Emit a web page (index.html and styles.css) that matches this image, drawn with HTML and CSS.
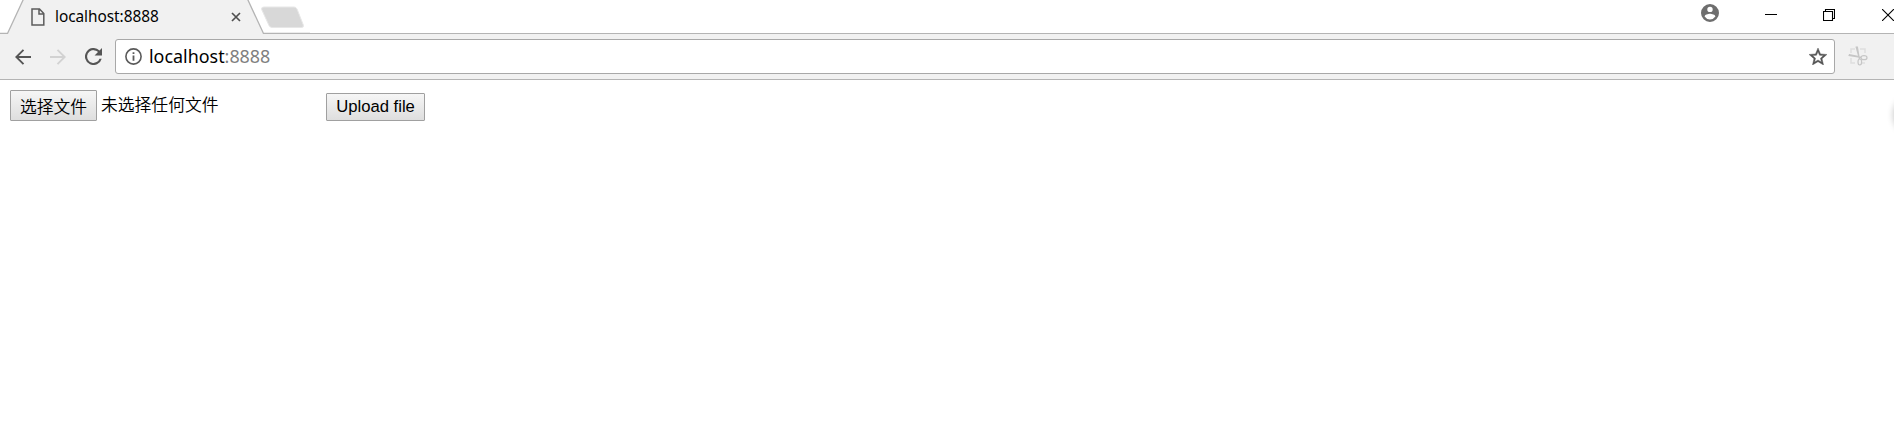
FILE: index.html
```
<!DOCTYPE html>
<html lang="zh-CN">
<head>
<meta charset="utf-8">
<title>localhost:8888</title>
<link rel="stylesheet" href="styles.css">
</head>
<body>
<header class="tabstrip">
  <div class="tab">
    <svg class="tab-shape" width="310" height="34" viewBox="0 0 310 34">
      <path d="M7.5 34L24 -2H98L247 -2L263.5 34Z" fill="#f1f1f1"/>
      <path d="M0 33.5H7.5L24 -2M247 -2L263.5 33.5H310" fill="none" stroke="#b4b4b4" stroke-width="1.3"/>
      <path d="M264 7H294Q296 7 297 9L303.3 25Q304 27.5 301.5 27.5H272Q270 27.5 269 25.5L261.7 9.500Q261 7 264 7Z" fill="#d8d8d8" stroke="#e7e7e7" stroke-width="1"/>
    </svg>
    <div class="tab-content">
      <svg class="page-icon" width="14" height="18" viewBox="0 0 14 18" fill="none" stroke="#5c5c5c" stroke-width="1.5"><path d="M1 1H8.500L12.800 5.500V17H1ZM8 1V6H12.800"/></svg>
      <span class="tab-title">localhost:8888</span>
      <svg class="tab-close" width="10" height="10" viewBox="0 0 10 10" stroke="#505050" stroke-width="1.7"><path d="M1 1L9 9M9 1L1 9"/></svg>
    </div>
  </div>
  <div class="window-controls">
    <svg class="profile" width="18" height="18" viewBox="2 2 20 20" fill="#6e6e6e"><path d="M12 2a10 10 0 1 0 0 20 10 10 0 0 0 0-20zm0 3a3 3 0 1 1 0 6 3 3 0 0 1 0-6zm0 14.200a7.200 7.200 0 0 1-6-3.220c.03-2 4-3.080 6-3.080s5.970 1.090 6 3.080a7.200 7.200 0 0 1-6 3.220z"/></svg>
    <svg class="minimize" width="12" height="12" viewBox="0 0 12 12"><path d="M0 5.500H12" stroke="#000"/></svg>
    <svg class="restore" width="12" height="12" viewBox="0 0 12 12" fill="none" stroke="#000" stroke-width="1.100"><path d="M.5 2.500H9.500V11.500H.5ZM2.500 2.500V.5H11.500V9.500H9.500"/></svg>
    <svg class="close" width="12" height="12" viewBox="0 0 12 12"><path d="M0 0L12 12M12 0L0 12" stroke="#000" stroke-width="1.100"/></svg>
  </div>
</header>
<nav class="toolbar">
  <svg class="back" width="16" height="16" viewBox="0 0 16 16" fill="none" stroke="#555" stroke-width="1.900"><path d="M16 8H1.500M8.500 .8L1.300 8L8.500 15.200"/></svg>
  <svg class="forward" width="16" height="16" viewBox="0 0 16 16" fill="none" stroke="#d2d2d2" stroke-width="1.900"><path d="M0 8H14.500M7.500 .8L14.700 8L7.500 15.200"/></svg>
  <svg class="reload" width="17" height="17" viewBox="4 4 16 16" fill="#555"><path d="M17.650 6.350A8 8 0 1 0 19.730 14h-2.080A6 6 0 1 1 12 6c1.660 0 3.140.69 4.220 1.780L13 11h7V4z"/></svg>
  <div class="omnibox">
    <svg class="info" width="17" height="17" viewBox="0 0 17 17"><circle cx="8.500" cy="8.500" r="7.600" fill="none" stroke="#5a5a5a" stroke-width="1.600"/><path d="M8.500 7.500V12.800M8.500 4.200V6" stroke="#5a5a5a" stroke-width="1.800"/></svg>
    <span class="url">localhost<span class="port">:8888</span></span>
    <svg class="star" width="18" height="17" viewBox="2 2 20 19" fill="#555" stroke="#555" stroke-width=".5"><path d="M22 9.240l-7.190-.62L12 2 9.190 8.630 2 9.240l5.460 4.730L5.820 21 12 17.270 18.180 21l-1.630-7.030zM12 15.400l-3.760 2.270 1-4.280-3.320-2.880 4.380-.38L12 6.100l1.710 4.040 4.380.38-3.320 2.880 1 4.280z"/></svg>
  </div>
  <svg class="scissors" width="20" height="21" viewBox="0 0 20 21" fill="none"><path d="M3 7V3H7M12 3H17V7M3 12V17H7M13 17H17" stroke="#dedede" stroke-width="1.500"/><g stroke="#c6c6c6" stroke-width="1.200"><path d="M8 .5L11.500 13M9.300 .5L11 10.500M.5 9.300L13 11.300M1 8.500L11 10.500"/><ellipse cx="11.800" cy="16" rx="1.800" ry="3"/><ellipse cx="16" cy="11.700" rx="3" ry="2"/></g></svg>
</nav>
<main class="page">
  <form class="upload">
    <button class="btn choose" type="button">选择文件</button>
    <span class="status">未选择任何文件</span>
    <button class="btn submit" type="button">Upload file</button>
  </form>
  <div class="edge-glow"></div>
</main>
</body>
</html>
```
FILE: styles.css
```
* { box-sizing: border-box; }
body {
  margin: 0;
  height: 445px;
  overflow: hidden;
  background: #fff;
  color: #000;
  font-family: "Noto Sans", "Noto Sans CJK SC", sans-serif;
}
svg { display: block; flex: none; }
.tabstrip {
  display: flex;
  justify-content: space-between;
  height: 34px;
  background: linear-gradient(#b4b4b4, #b4b4b4) 300px 33px / 100% 1px no-repeat;
}
.tab { position: relative; width: 310px; }
.tab-shape { position: absolute; left: 0; top: 0; }
.tab-content {
  position: relative;
  display: flex;
  align-items: center;
  height: 34px;
  padding-left: 31px;
}
.tab-title {
  width: 175px;
  margin-left: 10px;
  font-size: 15.4px;
  letter-spacing: -.05px;
  line-height: 32px;
}
.tab-close { margin-left: 1px; }
.window-controls { display: flex; align-items: flex-start; }
.profile { margin: 4px 46px 0 0; }
.minimize { margin: 9px 46px 0 0; }
.restore { margin: 9px 47px 0 0; }
.close { margin: 9px 0 0 0; }
.toolbar {
  display: flex;
  align-items: center;
  height: 46px;
  padding: 0 26px 0 15px;
  background: #f1f1f1;
  border-bottom: 1px solid #b4b4b4;
}
.forward { margin-left: 19px; }
.reload { margin-left: 19px; }
.omnibox {
  flex: 1;
  display: flex;
  align-items: center;
  height: 35px;
  margin: 0 13px;
  padding: 0 7px 0 9px;
  background: #fff;
  border: 1px solid #a8a8a8;
  border-radius: 3px;
}
.url { flex: 1; margin-left: 7px; font-size: 17.9px; line-height: 33px; }
.port { color: #808080; }
.page { position: relative; height: 365px; overflow: hidden; }
.upload { display: flex; align-items: flex-start; padding: 10px; }
.btn {
  padding: 0;
  border: 1px solid #a0a0a0;
  border-radius: 1px;
  background: linear-gradient(#f6f6f6, #dedede);
  color: #000;
  white-space: nowrap;
}
.choose {
  width: 87px;
  height: 31px;
  font: 350 16.8px/28px "Noto Sans CJK SC DemiLight", "Noto Sans CJK SC", sans-serif;
}
.status {
  width: 225px;
  margin-left: 4px;
  font: 350 16.8px/29px "Noto Sans CJK SC DemiLight", "Noto Sans CJK SC", sans-serif;
}
.submit {
  width: 99px;
  height: 28px;
  margin-top: 3px;
  font: 16.67px/26px "Liberation Sans", Arial, sans-serif;
}
.edge-glow {
  position: absolute;
  right: -39px;
  top: 15px;
  width: 40px;
  height: 40px;
  border-radius: 50%;
  background: #e4e4e4;
  box-shadow: 0 0 6px rgba(0, 0, 0, .2);
}
```
